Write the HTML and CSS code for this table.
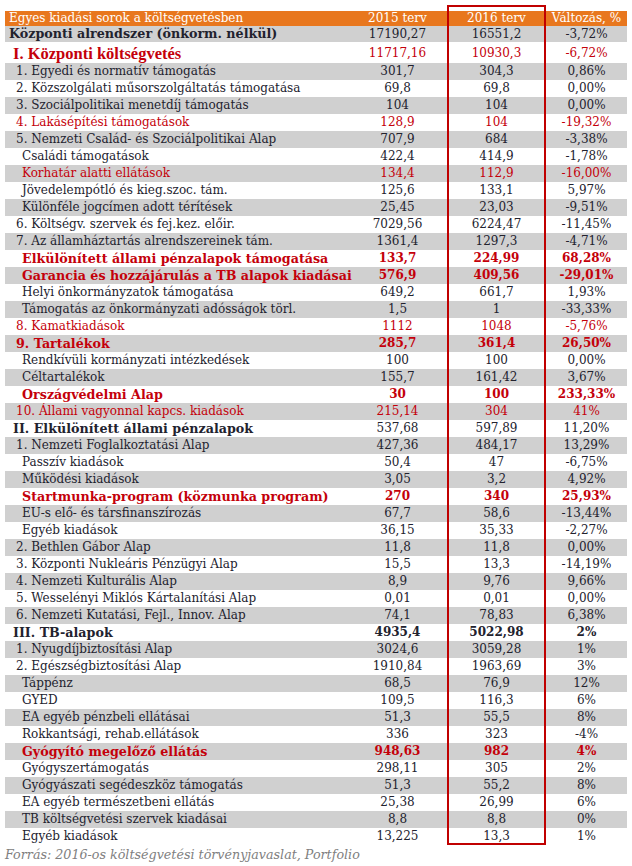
FILE: index.html
```html
<!DOCTYPE html>
<html lang="hu">
<head>
<meta charset="utf-8">
<title>Egyes kiadási sorok a költségvetésben</title>
<link rel="stylesheet" href="styles.css">
</head>
<body>
<div class="sheet">
  <div class="box"></div>
  <div class="row head"><div class="lab">Egyes kiadási sorok a költségvetésben</div><div>2015 terv</div><div>2016 terv</div><div>Változás, %</div></div>
  <div class="row g b first"><div class="lab">Központi alrendszer (önkorm. nélkül)</div><div class="nb">17190,27</div><div class="nb">16551,2</div><div class="nb">-3,72%</div></div>
  <div class="row r b big"><div class="lab i1">I. Központi költségvetés</div><div class="nb">11717,16</div><div class="nb">10930,3</div><div class="nb">-6,72%</div></div>
  <div class="row g"><div class="lab i2">1. Egyedi és normatív támogatás</div><div>301,7</div><div>304,3</div><div>0,86%</div></div>
  <div class="row"><div class="lab i2">2. Közszolgálati műsorszolgáltatás támogatása</div><div>69,8</div><div>69,8</div><div>0,00%</div></div>
  <div class="row g"><div class="lab i2">3. Szociálpolitikai menetdíj támogatás</div><div>104</div><div>104</div><div>0,00%</div></div>
  <div class="row r"><div class="lab i2">4. Lakásépítési támogatások</div><div>128,9</div><div>104</div><div>-19,32%</div></div>
  <div class="row g"><div class="lab i2">5. Nemzeti Család- és Szociálpolitikai Alap</div><div>707,9</div><div>684</div><div>-3,38%</div></div>
  <div class="row"><div class="lab i3">Családi támogatások</div><div>422,4</div><div>414,9</div><div>-1,78%</div></div>
  <div class="row g r"><div class="lab i3">Korhatár alatti ellátások</div><div>134,4</div><div>112,9</div><div>-16,00%</div></div>
  <div class="row"><div class="lab i3">Jövedelempótló és kieg.szoc. tám.</div><div>125,6</div><div>133,1</div><div>5,97%</div></div>
  <div class="row g"><div class="lab i3">Különféle jogcímen adott térítések</div><div>25,45</div><div>23,03</div><div>-9,51%</div></div>
  <div class="row"><div class="lab i2">6. Költségv. szervek és fej.kez. előir.</div><div>7029,56</div><div>6224,47</div><div>-11,45%</div></div>
  <div class="row g"><div class="lab i2">7. Az államháztartás alrendszereinek tám.</div><div>1361,4</div><div>1297,3</div><div>-4,71%</div></div>
  <div class="row r b"><div class="lab i3">Elkülönített állami pénzalapok támogatása</div><div>133,7</div><div>224,99</div><div>68,28%</div></div>
  <div class="row g r b"><div class="lab i3">Garancia és hozzájárulás a TB alapok kiadásai</div><div>576,9</div><div>409,56</div><div>-29,01%</div></div>
  <div class="row"><div class="lab i3">Helyi önkormányzatok támogatása</div><div>649,2</div><div>661,7</div><div>1,93%</div></div>
  <div class="row g"><div class="lab i3">Támogatás az önkormányzati adósságok törl.</div><div>1,5</div><div>1</div><div>-33,33%</div></div>
  <div class="row r"><div class="lab i2">8. Kamatkiadások</div><div>1112</div><div>1048</div><div>-5,76%</div></div>
  <div class="row g r b"><div class="lab i2">9. Tartalékok</div><div>285,7</div><div>361,4</div><div>26,50%</div></div>
  <div class="row"><div class="lab i3">Rendkívüli kormányzati intézkedések</div><div>100</div><div>100</div><div>0,00%</div></div>
  <div class="row g"><div class="lab i3">Céltartalékok</div><div>155,7</div><div>161,42</div><div>3,67%</div></div>
  <div class="row r b"><div class="lab i3">Országvédelmi Alap</div><div>30</div><div>100</div><div>233,33%</div></div>
  <div class="row g r"><div class="lab i2">10. Állami vagyonnal kapcs. kiadások</div><div>215,14</div><div>304</div><div>41%</div></div>
  <div class="row b"><div class="lab i1">II. Elkülönített állami pénzalapok</div><div class="nb">537,68</div><div class="nb">597,89</div><div class="nb">11,20%</div></div>
  <div class="row g"><div class="lab i2">1. Nemzeti Foglalkoztatási Alap</div><div>427,36</div><div>484,17</div><div>13,29%</div></div>
  <div class="row"><div class="lab i3">Passzív kiadások</div><div>50,4</div><div>47</div><div>-6,75%</div></div>
  <div class="row g"><div class="lab i3">Működési kiadások</div><div>3,05</div><div>3,2</div><div>4,92%</div></div>
  <div class="row r b"><div class="lab i3">Startmunka-program (közmunka program)</div><div>270</div><div>340</div><div>25,93%</div></div>
  <div class="row g"><div class="lab i3">EU-s elő- és társfinanszírozás</div><div>67,7</div><div>58,6</div><div>-13,44%</div></div>
  <div class="row"><div class="lab i3">Egyéb kiadások</div><div>36,15</div><div>35,33</div><div>-2,27%</div></div>
  <div class="row g"><div class="lab i2">2. Bethlen Gábor Alap</div><div>11,8</div><div>11,8</div><div>0,00%</div></div>
  <div class="row"><div class="lab i2">3. Központi Nukleáris Pénzügyi Alap</div><div>15,5</div><div>13,3</div><div>-14,19%</div></div>
  <div class="row g"><div class="lab i2">4. Nemzeti Kulturális Alap</div><div>8,9</div><div>9,76</div><div>9,66%</div></div>
  <div class="row"><div class="lab i2">5. Wesselényi Miklós Kártalanítási Alap</div><div>0,01</div><div>0,01</div><div>0,00%</div></div>
  <div class="row g"><div class="lab i2">6. Nemzeti Kutatási, Fejl., Innov. Alap</div><div>74,1</div><div>78,83</div><div>6,38%</div></div>
  <div class="row b"><div class="lab i1">III. TB-alapok</div><div>4935,4</div><div>5022,98</div><div>2%</div></div>
  <div class="row g"><div class="lab i2">1. Nyugdíjbiztosítási Alap</div><div>3024,6</div><div>3059,28</div><div>1%</div></div>
  <div class="row"><div class="lab i2">2. Egészségbiztosítási Alap</div><div>1910,84</div><div>1963,69</div><div>3%</div></div>
  <div class="row g"><div class="lab i3">Táppénz</div><div>68,5</div><div>76,9</div><div>12%</div></div>
  <div class="row"><div class="lab i3">GYED</div><div>109,5</div><div>116,3</div><div>6%</div></div>
  <div class="row g"><div class="lab i3">EA egyéb pénzbeli ellátásai</div><div>51,3</div><div>55,5</div><div>8%</div></div>
  <div class="row"><div class="lab i3">Rokkantsági, rehab.ellátások</div><div>336</div><div>323</div><div>-4%</div></div>
  <div class="row g r b"><div class="lab i3">Gyógyító megelőző ellátás</div><div>948,63</div><div>982</div><div>4%</div></div>
  <div class="row"><div class="lab i3">Gyógyszertámogatás</div><div>298,11</div><div>305</div><div>2%</div></div>
  <div class="row g"><div class="lab i3">Gyógyászati segédeszköz támogatás</div><div>51,3</div><div>55,2</div><div>8%</div></div>
  <div class="row"><div class="lab i3">EA egyéb természetbeni ellátás</div><div>25,38</div><div>26,99</div><div>6%</div></div>
  <div class="row g"><div class="lab i3">TB költségvetési szervek kiadásai</div><div>8,8</div><div>8,8</div><div>0%</div></div>
  <div class="row"><div class="lab i3">Egyéb kiadások</div><div>13,225</div><div>13,3</div><div>1%</div></div>
  <div class="source">Forrás: 2016-os költségvetési törvényjavaslat, Portfolio</div>
</div>
</body>
</html>
```

FILE: styles.css
```css
html, body {
  margin: 0;
  padding: 0;
  background: #ffffff;
}

.sheet {
  position: relative;
  width: 622px;
  margin-left: 5px;
  padding-top: 11px;
  font-family: "DejaVu Serif", "Liberation Serif", serif;
  font-size: 12px;
  color: #22222e;
}

.row {
  display: grid;
  grid-template-columns: 343px 99px 99px 81px;
  height: 17px;
  line-height: 17px;
  white-space: nowrap;
}

.row > div {
  text-align: center;
}

.row > .lab {
  text-align: left;
}

.lab.i1 { padding-left: 8px; }
.lab.i2 { padding-left: 11px; }
.lab.i3 { padding-left: 17px; }

.head {
  background: #e8771e;
  color: #ffffff;
  height: 15px;
  line-height: 15px;
}

.head .lab {
  padding-left: 4px;
}

.first {
  height: 16px;
  line-height: 16px;
}

.first .lab {
  padding-left: 4px;
}

.g {
  background: #d0d0d0;
}

.r {
  color: #c4000a;
}

.b {
  font-weight: bold;
}

.b .lab {
  font-size: 12.7px;
}

.big {
  height: 21px;
  line-height: 23px;
}

.big .lab {
  font-family: "Liberation Serif", serif;
  font-size: 16.5px;
}

.nb {
  font-weight: normal;
}

.box {
  position: absolute;
  left: 442px;
  top: 5px;
  width: 95px;
  height: 836px;
  border: 2px solid #c00000;
  pointer-events: none;
}

.source {
  font-style: italic;
  color: #808080;
  font-size: 12.7px;
  padding-top: 1px;
  line-height: 18px;
}
```
